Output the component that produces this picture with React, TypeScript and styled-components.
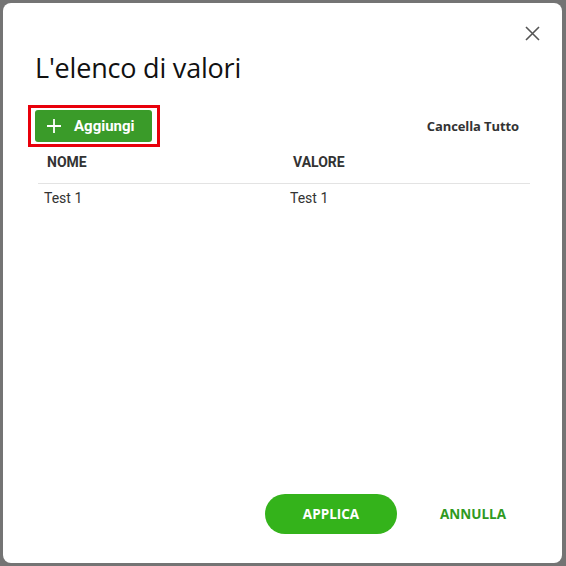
import React from "react";
import styled, { createGlobalStyle } from "styled-components";

const Global = createGlobalStyle`
  html, body { margin: 0; padding: 0; }
  body { background: #747474; width: 566px; height: 566px; overflow: hidden; }
  * { box-sizing: border-box; }
`;

const Backdrop = styled.div`
  width: 566px;
  height: 566px;
  padding: 3px 4px 3px 3px;
  display: flex;
`;

const Dialog = styled.div`
  flex: 1;
  background: #fff;
  border-radius: 8px;
  display: flex;
  flex-direction: column;
  padding: 0 32px 29px 32px;
  position: relative;
`;

const Close = styled.button`
  position: absolute;
  top: 17px;
  right: 17px;
  width: 26px;
  height: 26px;
  border: none;
  background: transparent;
  padding: 0;
  display: flex;
  align-items: center;
  justify-content: center;
  cursor: pointer;
`;

const Title = styled.h1`
  margin: 47px 0 0 0;
  font-family: "Open Sans", "Noto Sans", sans-serif;
  font-weight: 400;
  font-size: 27px;
  line-height: 36px;
  color: #111;
  letter-spacing: -0.2px;
`;

const Toolbar = styled.div`
  margin-top: 19px;
  margin-left: -7px;
  display: flex;
  align-items: center;
  justify-content: space-between;
`;

const Highlight = styled.div`
  border: 3px solid #e8000b;
  padding: 2px 5px 2px 4px;
  display: flex;
`;

const AddButton = styled.button`
  height: 32px;
  width: 117px;
  border: none;
  border-radius: 3px;
  background: #3a9b29;
  color: #fff;
  display: flex;
  align-items: center;
  gap: 13px;
  padding: 0 0 0 12px;
  font-family: Roboto, "Liberation Sans", sans-serif;
  font-weight: 700;
  font-size: 15px;
  cursor: pointer;
`;

const ClearButton = styled.button`
  border: none;
  background: transparent;
  font-family: "Open Sans", "Noto Sans", sans-serif;
  font-weight: 700;
  font-size: 13px;
  color: #333;
  padding: 0;
  margin-right: 11px;
  letter-spacing: -0.1px;
  cursor: pointer;
`;

const Table = styled.div`
  margin-top: 1px;
  margin-left: 3px;
  display: grid;
  grid-template-columns: 246px 1fr;
`;

const HeadCell = styled.div`
  font-family: Roboto, "Liberation Sans", sans-serif;
  font-weight: 700;
  font-size: 14px;
  line-height: 16px;
  color: #333;
  text-transform: uppercase;
  height: 36px;
  display: flex;
  align-items: center;
  padding: 0 0 7px 9px;
  border-bottom: 1px solid #e3e3e3;
`;

const Cell = styled.div`
  font-family: Roboto, "Liberation Sans", sans-serif;
  font-size: 14px;
  color: #333;
  height: 27px;
  display: flex;
  align-items: center;
  padding-left: 6px;
`;

const Spacer = styled.div`
  flex: 1;
`;

const Footer = styled.div`
  display: flex;
  justify-content: flex-end;
  align-items: center;
  gap: 19px;
`;

const PrimaryButton = styled.button`
  width: 132px;
  height: 40px;
  border-radius: 20px;
  border: none;
  background: #34b31b;
  color: #fff;
  font-family: "Open Sans", "Noto Sans", sans-serif;
  font-weight: 700;
  font-size: 13.5px;
  cursor: pointer;
`;

const TextButton = styled.button`
  width: 114px;
  height: 40px;
  border: none;
  background: transparent;
  color: #2f9a1f;
  font-family: "Open Sans", "Noto Sans", sans-serif;
  font-weight: 700;
  font-size: 13.5px;
  cursor: pointer;
`;

const rows = [{ nome: "Test 1", valore: "Test 1" }];

export default function App() {
  return (
    <>
      <Global />
      <Backdrop>
        <Dialog>
          <Close aria-label="Chiudi">
            <svg width="15" height="15" viewBox="0 0 15 15">
              <path d="M1 1 L14 14 M14 1 L1 14" stroke="#555" strokeWidth="1.6" fill="none" />
            </svg>
          </Close>
          <Title>L'elenco di valori</Title>
          <Toolbar>
            <Highlight>
              <AddButton>
                <svg width="14" height="14" viewBox="0 0 14 14">
                  <path d="M7 0 V14 M0 7 H14" stroke="#fff" strokeWidth="1.8" fill="none" />
                </svg>
                Aggiungi
              </AddButton>
            </Highlight>
            <ClearButton>Cancella Tutto</ClearButton>
          </Toolbar>
          <Table>
            <HeadCell>Nome</HeadCell>
            <HeadCell>Valore</HeadCell>
            {rows.map((r, i) => (
              <React.Fragment key={i}>
                <Cell>{r.nome}</Cell>
                <Cell>{r.valore}</Cell>
              </React.Fragment>
            ))}
          </Table>
          <Spacer />
          <Footer>
            <PrimaryButton>APPLICA</PrimaryButton>
            <TextButton>ANNULLA</TextButton>
          </Footer>
        </Dialog>
      </Backdrop>
    </>
  );
}
